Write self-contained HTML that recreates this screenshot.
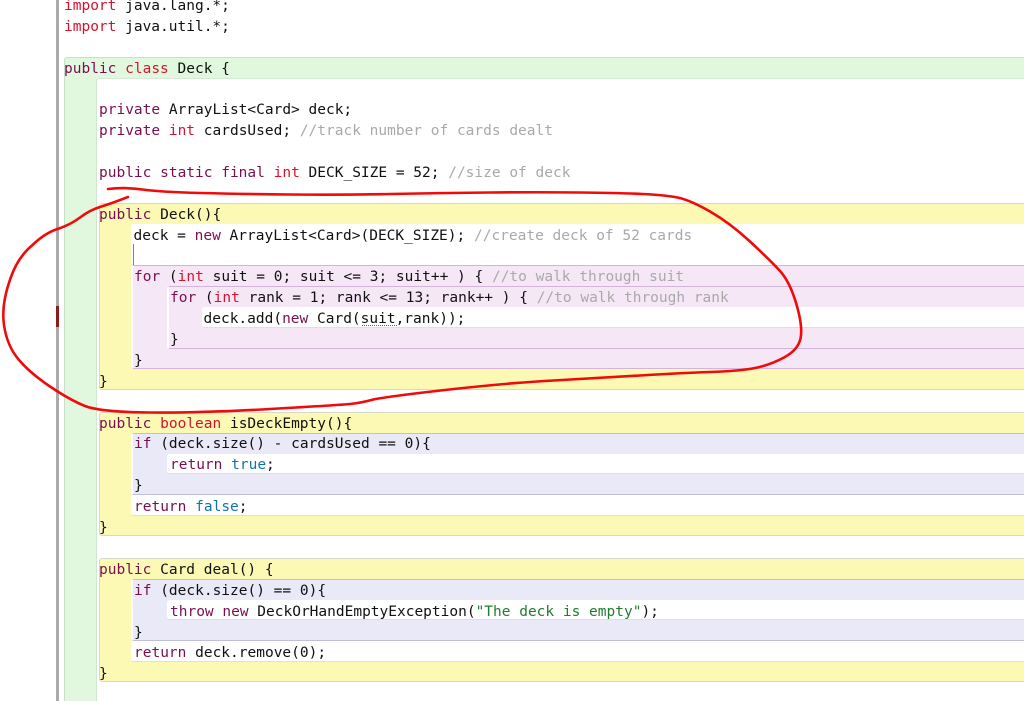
<!DOCTYPE html>
<html><head><meta charset="utf-8"><style>
html,body{margin:0;padding:0;background:#fff}
#p{position:relative;width:1024px;height:701px;overflow:hidden;background:#fff;font-family:"DejaVu Sans Mono","Liberation Mono",monospace;font-size:14.5px;color:#111}
#p div{position:absolute;box-sizing:border-box}
.l{white-space:pre;height:20px;line-height:20px;margin-top:1px}
.y,.w,.k,.v,.g{right:-4px}
.y{background:#fbf9b4;border:1px solid #d8d8c8;border-radius:3px 0 0 3px}
.w{background:#fff;border-radius:3px 0 0 3px}
.k{background:#f6e7f7;border:1px solid #d4b4d8;border-left:2px solid #fff;border-radius:3px 0 0 3px}
.v{background:#e9e9f7;border:1px solid #bfbfdc;border-left:2px solid #fff;border-radius:3px 0 0 3px}
.b{border-bottom:1px solid #d8e4d8}
b{font-weight:normal;color:#7a0f50}
i{font-style:normal;color:#d3142e}
u{text-decoration:none;color:#a9a9a9}
s{text-decoration:none;color:#1274a6}
em{font-style:normal;color:#1f7d2e}
</style></head><body><div id="p">
<div style="left:56px;top:0;width:3px;height:701px;background:#aaa"></div>
<div style="left:56px;top:306px;width:3px;height:21px;background:#8a1c1c"></div>

<div class="g" style="left:64px;top:57px;height:660px;background:#e1f8df;border:1px solid #c8e0c8;border-radius:3px 0 0 0"></div>
<div class="w" style="left:96px;top:78px;height:640px;border-left:1px solid #cfe6cf;border-top:1px solid #d8e8d8"></div>

<div class="y" style="left:99px;top:203px;height:187px"></div>
<div class="w b" style="left:131px;top:224px;height:42px"></div>
<div class="k" style="left:131px;top:265px;height:104px"></div>
<div class="k" style="left:167px;top:286px;height:63px"></div>
<div class="w b" style="left:202px;top:307px;height:21px"></div>
<div style="left:133px;top:244px;width:1px;height:21px;background:#e0507a"></div>

<div class="y" style="left:99px;top:412px;height:124px"></div>
<div class="v" style="left:131px;top:433px;height:62px"></div>
<div class="w b" style="left:167px;top:454px;height:20px"></div>
<div class="w b" style="left:131px;top:495px;height:21px"></div>

<div class="y" style="left:99px;top:558px;height:124px"></div>
<div class="v" style="left:131px;top:579px;height:62px"></div>
<div class="w b" style="left:167px;top:600px;height:20px"></div>
<div class="w b" style="left:131px;top:641px;height:21px"></div>

<div class="l" style="left:64px;top:-5px"><i>import</i> java.lang.*;</div>
<div class="l" style="left:64px;top:16px"><i>import</i> java.util.*;</div>
<div class="l" style="left:64px;top:58px"><b>public</b> <i>class</i> Deck {</div>
<div class="l" style="left:99px;top:99px"><b>private</b> ArrayList&lt;Card&gt; deck;</div>
<div class="l" style="left:99px;top:120px"><b>private</b> <i>int</i> cardsUsed; <u>//track number of cards dealt</u></div>
<div class="l" style="left:99px;top:162px"><b>public static final</b> <i>int</i> DECK_SIZE = 52; <u>//size of deck</u></div>
<div class="l" style="left:99px;top:204px"><b>public</b> Deck(){</div>
<div class="l" style="left:133.5px;top:225px">deck = <b>new</b> ArrayList&lt;Card&gt;(DECK_SIZE); <u>//create deck of 52 cards</u></div>
<div class="l" style="left:134px;top:266px"><b>for</b> (<i>int</i> suit = 0; suit &lt;= 3; suit++ ) { <u>//to walk through suit</u></div>
<div class="l" style="left:170px;top:287px"><b>for</b> (<i>int</i> rank = 1; rank &lt;= 13; rank++ ) { <u>//to walk through rank</u></div>
<div class="l" style="left:203.5px;top:308px">deck.add(<b>new</b> Card(suit,rank));</div>
<div style="left:362px;top:325px;width:35px;height:0;border-top:1px dotted #ff2020;z-index:2"></div>
<div class="l" style="left:170px;top:329px">}</div>
<div class="l" style="left:134px;top:350px">}</div>
<div class="l" style="left:99px;top:371px">}</div>
<div class="l" style="left:99px;top:413px"><b>public</b> <i>boolean</i> isDeckEmpty(){</div>
<div class="l" style="left:134px;top:433px"><b>if</b> (deck.size() - cardsUsed == 0){</div>
<div class="l" style="left:170px;top:454px"><b>return</b> <s>true</s>;</div>
<div class="l" style="left:134px;top:475px">}</div>
<div class="l" style="left:134px;top:496px"><b>return</b> <s>false</s>;</div>
<div class="l" style="left:99px;top:517px">}</div>
<div class="l" style="left:99px;top:559px"><b>public</b> Card deal() {</div>
<div class="l" style="left:134px;top:580px"><b>if</b> (deck.size() == 0){</div>
<div class="l" style="left:170px;top:601px"><b>throw new</b> DeckOrHandEmptyException(<em>"The deck is empty"</em>);</div>
<div class="l" style="left:134px;top:622px">}</div>
<div class="l" style="left:134px;top:642px"><b>return</b> deck.remove(0);</div>
<div class="l" style="left:99px;top:663px">}</div>

<svg width="1024" height="701" style="position:absolute;left:0;top:0;z-index:3" fill="none" stroke="#f00a0a" stroke-width="2.6" stroke-linecap="round" stroke-linejoin="round">
<path d="M108,189 Q125,187 142.5,189.5 Q160,192 200,193 Q240,194 290,194.5 Q340,195 390,194 Q440,193 490,192.5 Q540,192 580,192.5 Q620,193 642.5,194 Q665,195 677.5,197.5 Q690,200 710,211.5 Q730,223 750,241.5 Q770,260 780,271 Q790,282 796.5,304.5 Q803,327 800.5,338.5 Q798,350 784,357.5 Q770,365 755,368 Q740,371 710,372 Q680,373 640,375.5 Q600,378 553.5,380.5 Q507,383 445,390 Q383,397 371.5,400 Q360,403 350,404 Q340,405 270,409 Q200,413 150,412.5 Q100,412 85,406 Q70,400 50,386.5 Q30,373 19,360 Q7,346 4,325 Q1,304 11,277 Q18,257 32.5,245 Q45,233 57.5,229 Q70,225 80,217.5 Q90,210 100,207 Q110,204 128,197"/>
</svg>
</div></body></html>
